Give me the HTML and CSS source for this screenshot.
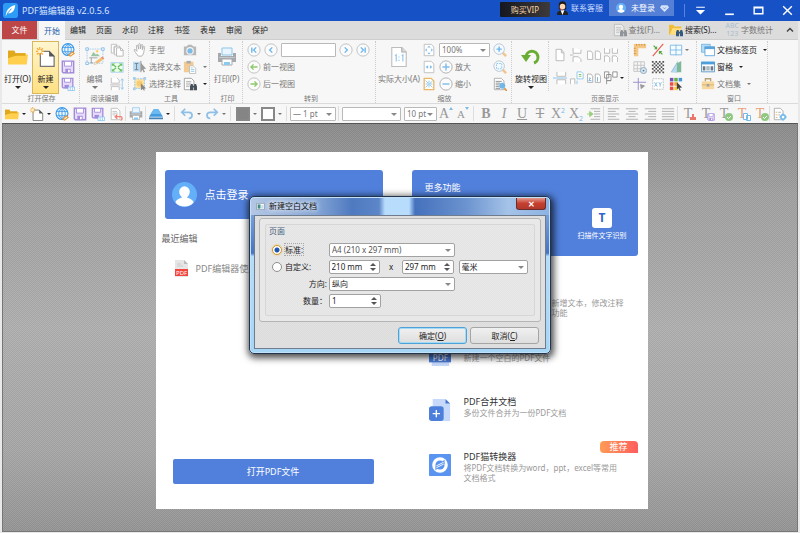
FILE: index.html
```html
<!DOCTYPE html>
<html lang="zh-CN">
<head>
<meta charset="utf-8">
<title>PDF猫编辑器 v2.0.5.6</title>
<link rel="stylesheet" href="styles.css">
</head>
<body>
<svg class="defs" aria-hidden="true">
  <symbol id="folder" viewBox="0 0 16 16"><path d="M0 13V3h5l1 2h8v3" fill="#e5ae22"/><path d="M0 14V8l6-1 1-1h9l-1 8z" fill="#ffcf4d"/><path d="M0 13V3h5l1 2h8v2H6L0 9z" fill="#e0a91c"/></symbol>
  <symbol id="newdoc" viewBox="0 0 16 16"><path d="M3.500 3.500h7l4 4v8h-11z" fill="#fff" stroke="#777"/><path d="M10.500 3v4.500H15z" fill="#555"/><path d="M3 0v7M0 3.500h6.500M.8 1l4.600 5M5.400 1L.8 6" stroke="#f3aa3b" fill="none"/><circle cx="3" cy="3.500" r="1.500" fill="#fff1c5"/></symbol>
  <symbol id="globe" viewBox="0 0 16 16"><circle cx="8" cy="7.500" r="6.800" fill="#e9f5ff" stroke="#3b98e8" stroke-width="1.300"/><path d="M1.500 5h13M1.500 10h13M8 1v13M8 1C3 5 3 10 8 14M8 1c5 4 5 9 0 13" fill="none" stroke="#3b98e8"/><path d="M9 14l4-4 2 2-4 3z" fill="#fff" stroke="#e89937" stroke-width="1.300"/></symbol>
  <symbol id="save" viewBox="0 0 16 16"><path d="M1.500 1.500h13v13h-12l-1-1z" fill="#e7ddfa" stroke="#a38bd9" stroke-width="1.600"/><path d="M4 2v5h8V2" fill="#fff" stroke="#a38bd9"/><path d="M5 10h6v5H5z" fill="#a38bd9"/><path d="M8 11h2v3H8z" fill="#fff"/></symbol>
  <symbol id="saveas" viewBox="0 0 16 16"><path d="M1.500 1.500h12v11h-11l-1-1z" fill="#e7ddfa" stroke="#a38bd9" stroke-width="1.500"/><path d="M4 2v4h7V2" fill="#fff" stroke="#a38bd9"/><path d="M4 9h5v4H4z" fill="#a38bd9"/><path d="M8 11.500h7.500v4H8zM10.500 12v3M13 12v3" fill="#fff" stroke="#73b9ea" stroke-width=".8"/></symbol>
  <symbol id="editimg" viewBox="0 0 24 24"><path d="M2.500 2.500h19v17h-19z" fill="none" stroke="#9fc9ea" stroke-dasharray="2 1"/><path d="M1 1h3v3H1zM20 1h3v3h-3zM1 18h3v3H1z" fill="#fff" stroke="#79b6e8"/><path d="M7 11l3-5 3 3 2-1 3 3z" fill="#9ac5a2"/><circle cx="14.500" cy="5" r="1.500" fill="#ffcf6c"/><path d="M5 13h10M7.500 13v6M6 19h4" stroke="#999" fill="none"/><path d="M11 21l1-3 8-6 3 2-8 6z" fill="#f3bd76"/><path d="M11 21l1-3 3 2z" fill="#fff2d8" stroke="#bbb" stroke-width=".5"/><path d="M19 12.500l2-1 2 2-1 1z" fill="#e88878"/></symbol>
  <symbol id="copy" viewBox="0 0 16 16"><path d="M1.500 1.500h6v3h-3v7h-3zM5 3.500h6v3H8v7H5z" fill="#fff" stroke="#bbb"/><path d="M7.500 5.500h5l2.500 2.500v7H7.500z" fill="#fff" stroke="#b3b3b3"/><path d="M12 5.500V8.500h3" fill="none" stroke="#b3b3b3"/></symbol>
  <symbol id="fit" viewBox="0 0 16 16"><path d="M1 3h14v11H1z" fill="#eaffe5" stroke="#a8cfee"/><path d="M3 5l4 3M13 5L9 8M3 12l4-3M13 12L9 9" stroke="#5db75d" stroke-width="1.300"/><path d="M2 4h4L2 7zM14 4h-4l4 3zM2 13h4l-4-3zM14 13h-4l4-3z" fill="#71bc69"/></symbol>
  <symbol id="heightfit" viewBox="0 0 16 16"><path d="M1.500 1v6h9V3.500L8 1M1.500 15v-4h9v4M0 9h12" fill="#fff" stroke="#bdbdbd"/><path d="M14 2v12M12.500 4L14 2l1.500 2M12.500 12l1.500 2 1.500-2" stroke="#92c8ee" fill="none"/></symbol>
  <symbol id="hand" viewBox="0 0 16 16"><path d="M4.500 13C2 10 1 8 1.500 7.500S4 8.500 4.500 9.500L4 3.500c0-1.500 1.500-1.500 1.700 0L6.500 7 6.700 1.800c0-1.500 1.600-1.500 1.700 0l.2 5 .9-4.300c.3-1.300 1.800-1 1.600.3l-.5 5 1.200-3.300c.5-1.200 1.800-.7 1.500.6C12 10 13 12 10 15H6z" fill="#fff" stroke="#aaa"/></symbol>
  <symbol id="seltext" viewBox="0 0 16 16"><path d="M0 2h8v11H0z" fill="#b9d9f0"/><path d="M2 4h4M4 4v7M2 11h4" stroke="#6f7f8c"/><path d="M9 1v13" stroke="#888"/><path d="M9 3l6 7-3 .3 1.700 3.200-1.500.7-1.600-3L9 13z" fill="#9b9b9b"/></symbol>
  <symbol id="selnote" viewBox="0 0 16 16"><path d="M2 2h11v11H2z" fill="#ffe3a5" stroke="#88c2ed" stroke-dasharray="2 1"/><circle cx="7.500" cy="7.500" r="3.500" fill="#f9cb72"/><path d="M0 0h3v3H0zM12 0h3v3h-3zM0 12h3v3H0z" fill="#a5cfed"/><path d="M9 7l6 6-2.500.2 1 2-1 .5-1.200-2L9 15z" fill="#888"/></symbol>
  <symbol id="camera" viewBox="0 0 16 16"><path d="M1 4h3l2-2h4l2 2h3v10H1z" fill="#b8b8b8"/><circle cx="8" cy="9" r="4.300" fill="#f4f4f4"/><circle cx="8" cy="9" r="3" fill="#7dbce7"/></symbol>
  <symbol id="paste" viewBox="0 0 16 16"><path d="M1 2h11v12H1z" fill="#f3ca92"/><path d="M4 1h5v3H4z" fill="#aaa"/><path d="M7.500 6.500h4l3 3v6h-7z" fill="#fff" stroke="#bbb"/><path d="M9 9h2M9 11h4M9 13h4" stroke="#8ec8ed"/></symbol>
  <symbol id="finddoc" viewBox="0 0 16 16"><path d="M1.500 1.500h8l3 3v10h-11z" fill="#fff" stroke="#999"/><path d="M3.500 5h6M3.500 7h6M3.500 9h5M3.500 11h4" stroke="#aaa"/><path d="M8 10.500L9 8h2l.5 2h1L13 8h2l1 3v4h-3.500v-3h-1v3H8z" fill="#47515b"/></symbol>
  <symbol id="findfolder" viewBox="0 0 16 16"><path d="M0 13V2h5l1 2h8v9z" fill="#efbd37"/><path d="M1 13l3-7h10v7z" fill="#ffdf83"/><path d="M8 10.500L9 8h2l.5 2h1L13 8h2l1 3v4h-3.500v-3h-1v3H8z" fill="#345a80"/></symbol>
  <symbol id="printer" viewBox="0 0 20 20"><path d="M5 1h10v7H5z" fill="#eaf5ff" stroke="#90c5eb"/><path d="M1 6h3v3h12V6h3v9H1z" fill="#a5a9ad"/><path d="M2 10h16v1H2z" fill="#c5c9cc"/><path d="M5 12h10v6H5z" fill="#fff" stroke="#aaa"/><path d="M7 15h6v3H7z" fill="#8cc9f1"/></symbol>
  <symbol id="first" viewBox="0 0 16 16"><circle cx="8" cy="8" r="7" fill="#fbfbfb" stroke="#bbb"/><path d="M5.500 5v6M10.500 5l-3 3 3 3" fill="none" stroke="#6fb8ed" stroke-width="1.600"/></symbol>
  <symbol id="prev" viewBox="0 0 16 16"><circle cx="8" cy="8" r="7" fill="#fbfbfb" stroke="#bbb"/><path d="M9.500 5l-3 3 3 3" fill="none" stroke="#6fb8ed" stroke-width="1.600"/></symbol>
  <symbol id="next" viewBox="0 0 16 16"><circle cx="8" cy="8" r="7" fill="#fbfbfb" stroke="#bbb"/><path d="M6.500 5l3 3-3 3" fill="none" stroke="#6fb8ed" stroke-width="1.600"/></symbol>
  <symbol id="last" viewBox="0 0 16 16"><circle cx="8" cy="8" r="7" fill="#fbfbfb" stroke="#bbb"/><path d="M10.500 5v6M5.500 5l3 3-3 3" fill="none" stroke="#6fb8ed" stroke-width="1.600"/></symbol>
  <symbol id="back" viewBox="0 0 16 16"><circle cx="8" cy="8" r="7" fill="#fbfbfb" stroke="#bbb"/><path d="M12 8H5M7.500 5L4.500 8l3 3" fill="none" stroke="#90c96c" stroke-width="1.600"/></symbol>
  <symbol id="forward" viewBox="0 0 16 16"><circle cx="8" cy="8" r="7" fill="#fbfbfb" stroke="#bbb"/><path d="M4 8h7M8.500 5l3 3-3 3" fill="none" stroke="#90c96c" stroke-width="1.600"/></symbol>
  <symbol id="plus" viewBox="0 0 16 16"><circle cx="8" cy="8" r="7" fill="#fbfbfb" stroke="#aaa"/><path d="M4 8h8M8 4v8" stroke="#7fbdea" stroke-width="1.600"/></symbol>
  <symbol id="minus" viewBox="0 0 16 16"><circle cx="8" cy="8" r="7" fill="#fbfbfb" stroke="#aaa"/><path d="M4 8h8" stroke="#7fbdea" stroke-width="1.600"/></symbol>
  <symbol id="actual" viewBox="0 0 16 18"><path d="M1.500.5h9l4 4v13h-13z" fill="#fff" stroke="#bdbdbd"/><path d="M10.500.5v4h4" fill="#ddd" stroke="#aaa"/><path d="M4.500 8l1-1v6M10.500 8l1-1v6M8 8.500v1M8 11.500v1" stroke="#8fc5ea" fill="none"/></symbol>
  <symbol id="pagefit" viewBox="0 0 16 16"><path d="M2.500 1.500h8l3 3v10h-11z" fill="#fff" stroke="#bbb"/><path d="M8 3l2 2H6zM8 13l2-2H6zM3.500 8l2-2v4zM12.500 8l-2-2v4z" fill="#7fbdea"/></symbol>
  <symbol id="widthfit" viewBox="0 0 16 16"><path d="M2.500 1.500h8l3 3v10h-11z" fill="#fff" stroke="#bbb"/><path d="M4 8l3-2v4zM12 8L9 6v4z" fill="#7fbdea"/></symbol>
  <symbol id="visfit" viewBox="0 0 16 16"><path d="M2.500 1.500h8l3 3v10h-11z" fill="#fff" stroke="#e9b866" stroke-width="1.500"/><path d="M4 4l3 3M12 5L9 7M4 12l3-3M12 12L9 9M8 4v8M4 8h8" stroke="#8fc5ea"/></symbol>
  <symbol id="magnify" viewBox="0 0 16 16"><path d="M11 11l4 4" stroke="#f1c68f" stroke-width="3"/><circle cx="7" cy="7" r="6" fill="#f4faff" stroke="#b5c3cf"/><path d="M4 7h6M7 4v6" stroke="#6cb5ea" stroke-width="1.600"/></symbol>
  <symbol id="marquee" viewBox="0 0 16 16"><path d="M11 11l4 4" stroke="#f1c68f" stroke-width="3"/><circle cx="7" cy="7" r="6" fill="#f4faff" stroke="#b5c3cf"/><path d="M4 4h6v6H4z" fill="none" stroke="#8cc6ed" stroke-dasharray="2 1"/></symbol>
  <symbol id="doczoom" viewBox="0 0 16 16"><path d="M1.500 1.500h8l3 3v10h-11z" fill="#fff" stroke="#aaa"/><path d="M3 5h7M3 7h5M3 9h4M3 11h4M3 13h5" stroke="#888"/><circle cx="10.500" cy="10" r="3.500" fill="#72b8e7"/><path d="M13 13l3 3" stroke="#df963c" stroke-width="2"/></symbol>
  <symbol id="rotate" viewBox="0 0 20 20"><path d="M5 10A6 6 0 1 1 13 16" fill="none" stroke="#69ad34" stroke-width="3"/><path d="M0 8h10l-5 7z" fill="#69ad34"/></symbol>
  <symbol id="page" viewBox="0 0 16 16"><path d="M3.500 1.500h6l3 4v9h-9z" fill="#fff" stroke="#b3b3b3"/><path d="M9.500 1.500v4h3" fill="none" stroke="#b3b3b3"/></symbol>
  <symbol id="contpage" viewBox="0 0 16 16"><path d="M3.500 0v6h9V2M3.500 16v-6h6l3 3v3M0 8h4" fill="#fff" stroke="#b3b3b3"/></symbol>
  <symbol id="twopage" viewBox="0 0 16 16"><path d="M.5 3.500h4l2 2.500v7h-6zM9.500 3.500h4l2 2.500v7h-6z" fill="#fff" stroke="#b3b3b3"/></symbol>
  <symbol id="fourpage" viewBox="0 0 16 16"><path d="M.5 0v6h6V1M9.500 0v6h6V1M.5 16V9h4l2 2v5M9.500 16V9h4l2 2v5" fill="#fff" stroke="#b3b3b3"/></symbol>
  <symbol id="splitpage" viewBox="0 0 16 16"><path d="M4.500 1v5h10V1M4.500 15v-5h10v5" fill="#fff" stroke="#b3b3b3"/><path d="M0 8h16" stroke="#7fc0ed"/></symbol>
  <symbol id="cover" viewBox="0 0 16 16"><path d="M.5 15V9h5v6" fill="#fff" stroke="#b3b3b3"/><path d="M8 1h5l2 2v6H8zM8 15v-4" fill="#fff" stroke="#89c5ec"/><path d="M10 4h3M10 6h3" stroke="#77b95b"/></symbol>
  <symbol id="order" viewBox="0 0 16 16"><path d="M.5 3.500h4l2 2.500v7h-6zM9.500 3.500h4l2 2.500v7h-6z" fill="#fff" stroke="#aaa"/><path d="M2 8h2l-2 3h3M12 7v5" fill="none" stroke="#68aee0"/></symbol>
  <symbol id="overlap" viewBox="0 0 16 16"><path d="M.5 1h5v7h-5zM3 4h5v7H3zM10 1h5v6h-5zM3 15v-4h5" fill="#fff" stroke="#888"/></symbol>
  <symbol id="ruler" viewBox="0 0 16 16"><path d="M1 1h14v5H6v9H1z" fill="#f3c887"/><path d="M4 1v2M7 1v2M10 1v2M13 1v2M1 6h2M1 9h2M1 12h2" stroke="#c98a3b"/></symbol>
  <symbol id="guides" viewBox="0 0 16 16"><path d="M2 15L14 1" stroke="#e85b50" stroke-width="1.300"/><path d="M3 3l3.500 3.500M13 13L9.500 9.500" stroke="#57a746" stroke-width="1.500"/><path d="M7 7V3.500L3.500 7zM9 9h4L9 13z" fill="#57a746"/></symbol>
  <symbol id="grid" viewBox="0 0 16 16"><path d="M1.500 2.500h13v11h-13zM1.500 8h13M8 2v12" fill="#f6fbff" stroke="#78b8e6"/></symbol>
  <symbol id="gridview" viewBox="0 0 16 16"><path d="M1 2h12v11H1zM1 6h12M1 10h12M5 2v11M9 2v11" fill="none" stroke="#c2c2c2"/><circle cx="12" cy="12" r="3.500" fill="#d4e7f4" stroke="#8aa2b6"/><circle cx="12" cy="12" r="1" fill="#54799a"/></symbol>
  <symbol id="checker" viewBox="0 0 16 16"><path d="M1 1h14v14H1z" fill="#fff"/><path d="M2 1v14M6 1v14M10 1v14M14 1v14" stroke="#555" stroke-width="2" stroke-dasharray="2 2"/><path d="M4 3v12M8 3v12M12 3v12" stroke="#555" stroke-width="2" stroke-dasharray="2 2"/></symbol>
  <symbol id="contrast" viewBox="0 0 16 16"><path d="M2 14L10 1v13z" fill="#90b7ce"/><path d="M9 4l5-3v13H7z" fill="#7fb99a"/><path d="M9 14V4l-6 10z" fill="#b7d8f2"/></symbol>
  <symbol id="cross" viewBox="0 0 16 16"><path d="M6 1v14M0 6h15" stroke="#9485ca"/><path d="M8 8l6 2-5 4z" fill="#999"/></symbol>
  <symbol id="xy" viewBox="0 0 16 16"><path d="M2 2h12v12H2z" fill="#fff" stroke="#bbb" stroke-dasharray="2 1"/><path d="M4 6l3 5M7 6l-3 5M9 6l1.500 2.500L12 6M10.500 8v3" stroke="#80b9e2" fill="none"/></symbol>
  <symbol id="palette" viewBox="0 0 16 16"><path d="M1 1h4v4H1z" fill="#7554b5"/><path d="M6 1h4v4H6z" fill="#6ab04a"/><path d="M11 1h4v4h-4z" fill="#4597dc"/><path d="M1 6h4v4H1z" fill="#e55249"/><path d="M6 6h4v4H6z" fill="#f6a83d"/><path d="M1 11h4v4H1z" fill="#e55249"/><path d="M6 11h4v4H6z" fill="#f5ce3f"/><path d="M9 6l6 6-3 .2 1.500 3-1.200.6-1.400-3L9 14z" fill="#444"/></symbol>
  <symbol id="tabs" viewBox="0 0 16 16"><path d="M.5 1.500h10v9H.5z" fill="#b5dcf7" stroke="#73b5e5"/><path d="M4.500 4.500h11v10h-11z" fill="#fff" stroke="#5ba3d9"/><path d="M4 4h12v3H4z" fill="#5ba3d9"/></symbol>
  <symbol id="panes" viewBox="0 0 16 16"><path d="M.5 2.500h15v11H.5z" fill="#fff" stroke="#4b91c7"/><path d="M0 2h16v3H0z" fill="#4b9fdc"/><path d="M2 7h3v5H2zM11 7h3v5h-3z" fill="#6d7b87"/><path d="M6 7h4v5H6z" fill="#adb8c0"/></symbol>
  <symbol id="case" viewBox="0 0 16 16"><path d="M5 5V2h6v3" fill="none" stroke="#b5a078" stroke-width="1.500"/><path d="M1 5h14v9H1z" fill="#f7d79c"/><path d="M1 9h14" stroke="#d6b06f"/><path d="M6.500 8h3v3h-3z" fill="#a3a3a3"/></symbol>
  <symbol id="revert" viewBox="0 0 16 16"><path d="M2.500 1.500h7l3 3v10h-10z" fill="#fff" stroke="#bbb"/><path d="M4 5h5M4 7h6M4 9h3" stroke="#bbb"/><path d="M7 11h6a2 2 0 0 1 0 4M9.500 8.500L7 11l2.500 2.500" fill="none" stroke="#ef8074" stroke-width="1.500"/></symbol>
  <symbol id="scanner" viewBox="0 0 16 16"><path d="M5 3C6 2 10 2 11 3l5 8H0z" fill="#449be0"/><path d="M5 3c1-1 5-1 6 0l3 5H2z" fill="#6cb8f0"/><path d="M0 12h16v2H0z" fill="#4383b8"/></symbol>
  <symbol id="undo" viewBox="0 0 16 16"><path d="M2 6h8c5 0 5 7 0 7M6 2L2 6l4 4" fill="none" stroke="#8fbfe6" stroke-width="2"/></symbol>
  <symbol id="redo" viewBox="0 0 16 16"><path d="M14 6H6c-5 0-5 7 0 7M10 2l4 4-4 4" fill="none" stroke="#8fbfe6" stroke-width="2"/></symbol>
  <symbol id="left" viewBox="0 0 16 16"><path d="M1 2h13M1 5h9M1 8h13M1 11h9M1 14h13" stroke="#aaa"/></symbol>
  <symbol id="center" viewBox="0 0 16 16"><path d="M1 2h14M4 5h8M1 8h14M4 11h8M1 14h14" stroke="#aaa"/></symbol>
  <symbol id="right" viewBox="0 0 16 16"><path d="M2 2h13M6 5h9M2 8h13M6 11h9M2 14h13" stroke="#aaa"/></symbol>
  <symbol id="justify" viewBox="0 0 16 16"><path d="M1 2h14M1 5h14M1 8h14M1 11h14M1 14h14" stroke="#aaa"/></symbol>
  <symbol id="indent" viewBox="0 0 16 16"><path d="M4 2h11M8 5h7M8 8h7M8 11h7M4 14h11" stroke="#aaa"/><path d="M0 8h4M3 5l4 3-4 3z" stroke="#9dce7c" fill="#9dce7c"/></symbol>
  <symbol id="stamp" viewBox="0 0 8 8"><path d="M3 1h2v3h2v3H1V4h2z" fill="#e87769"/></symbol>
  <symbol id="tick" viewBox="0 0 8 8"><circle cx="4" cy="4" r="4" fill="#8fc97f"/><path d="M2 4l1.500 1.500L6 3" fill="none" stroke="#fff"/></symbol>
  <symbol id="sheets" viewBox="0 0 8 8"><path d="M.5.5h4v6h-4zM3.500 2.500h4v5h-4z" fill="#fff" stroke="#74bbea"/></symbol>
  <symbol id="settings" viewBox="0 0 16 16"><path d="M1.500 1.500h7l3 3v10h-10z" fill="#fff" stroke="#aaa"/><path d="M3 6h2M3 9h2M3 12h2" stroke="#eaaa68"/><path d="M6 6h3M6 9h2" stroke="#aaa"/><circle cx="11.500" cy="11.500" r="2.500" fill="#fff" stroke="#74bbea" stroke-width="2"/><path d="M11.500 7v2M11.500 14v2M7 11.500h2M14 11.500h2" stroke="#74bbea"/></symbol>
  <symbol id="person" viewBox="0 0 26 26"><circle cx="13" cy="13" r="13" fill="#64b0f8"/><path d="M7.500 10a5.500 5.500 0 0 1 11 0c0 3-1.500 5-3 6 3 1 6 2 7 5-4 6-15 6-19 0 1-3 4-4 7-5-1.500-1-3-3-3-6z" fill="#fff"/></symbol>
</svg>

<div class="app">
  <header class="titlebar">
    <svg class="logo" viewBox="0 0 16 16"><rect width="16" height="16" rx="3" fill="#2d9cf5"/><path d="M3 14c0-6 3-10 10-12 0 5-3 9-7 9-1 0-2 1-3 3z" fill="#fff"/><path d="M4 12l5-6" stroke="#2d9cf5"/></svg>
    <h1>PDF猫编辑器 v2.0.5.6</h1>
    <button class="vip">购买VIP</button>
    <a class="service" href="#service"><svg class="agent" viewBox="0 0 14 16"><path d="M3 9V4c0-5 8-5 8 0v5z" fill="#201914"/><circle cx="7" cy="6" r="3" fill="#ffd7b5"/><path d="M1 15c0-4 3-5 6-5s6 1 6 5z" fill="#222"/><path d="M5 10l2 5 2-5z" fill="#fff"/><path d="M4 8l3 2" stroke="#e65d42"/></svg>联系客服</a>
    <button class="account"><svg class="avatar-small"><use href="#person"/></svg>未登录<svg class="gem" viewBox="0 0 12 9"><path d="M2 0h8l2 3-6 6-6-6z" fill="#d6e3f8"/><path d="M4 3l2 2 2-2" fill="none" stroke="#4d7dd0"/></svg></button>
    <div class="window-tools">
      <button aria-label="菜单"><svg viewBox="0 0 12 12"><path d="M2 3h8M3 6h6L6 9z" fill="#fff" stroke="#fff"/></svg></button>
      <button aria-label="最小化"><svg viewBox="0 0 12 12"><path d="M2 9.500h8" stroke="#fff" stroke-width="1.500"/></svg></button>
      <button aria-label="最大化"><svg viewBox="0 0 12 12"><path d="M2 3h8v6H2zM2 3.500h8" fill="none" stroke="#fff" stroke-width="1.300"/></svg></button>
      <button aria-label="关闭"><svg viewBox="0 0 12 12"><path d="M2 2l8 8M10 2l-8 8" stroke="#fff" stroke-width="1.300"/></svg></button>
    </div>
  </header>

  <nav class="tabs">
    <button class="file">文件</button>
    <button class="tab active">开始</button><button class="tab">编辑</button><button class="tab">页面</button><button class="tab">水印</button><button class="tab">注释</button><button class="tab">书签</button><button class="tab">表单</button><button class="tab">审阅</button><button class="tab">保护</button>
    <div class="tab-tools">
      <button class="muted"><svg class="i faded"><use href="#finddoc"/></svg>查找(F)...</button>
      <button><svg class="i"><use href="#findfolder"/></svg>搜索(S)...</button>
      <button class="muted"><span class="abc">ABC<br>123</span>字数统计</button>
      <button class="collapse" aria-label="折叠"><svg viewBox="0 0 8 8"><path d="M1 5.500l3-3 3 3" fill="none" stroke="#444" stroke-width="1.500"/></svg></button>
    </div>
  </nav>

  <section class="ribbon">
    <div class="group g-file">
      <div class="tools">
        <button class="big"><svg class="bi"><use href="#folder"/></svg>打开(O)<i class="ar"></i></button>
        <button class="big hot"><svg class="bi"><use href="#newdoc"/></svg>新建<i class="ar"></i></button>
        <div class="col">
          <button aria-label="网页"><svg class="i"><use href="#globe"/></svg></button>
          <button aria-label="保存"><svg class="i"><use href="#save"/></svg></button>
          <button aria-label="另存为"><svg class="i"><use href="#saveas"/></svg></button>
        </div>
      </div>
      <h2>打开保存</h2>
    </div>
    <div class="group g-edit">
      <div class="tools">
        <button class="big muted"><svg class="bi"><use href="#editimg"/></svg>编辑<i class="ar"></i></button>
        <div class="col">
          <button aria-label="复制"><svg class="i"><use href="#copy"/></svg></button>
          <button aria-label="全屏"><svg class="i"><use href="#fit"/></svg></button>
          <button aria-label="适合高度"><svg class="i"><use href="#heightfit"/></svg></button>
        </div>
      </div>
      <h2>阅读编辑</h2>
    </div>
    <div class="group g-tool">
      <div class="tools">
        <div class="col muted">
          <button><svg class="i"><use href="#hand"/></svg>手型</button>
          <button><svg class="i"><use href="#seltext"/></svg>选择文本</button>
          <button><svg class="i"><use href="#selnote"/></svg>选择注释</button>
        </div>
        <div class="col">
          <button aria-label="快照"><svg class="i"><use href="#camera"/></svg></button>
          <button class="muted" aria-label="粘贴"><svg class="i"><use href="#paste"/></svg><i class="ar"></i></button>
          <button aria-label="查找"><svg class="i"><use href="#finddoc"/></svg><i class="ar"></i></button>
        </div>
      </div>
      <h2>工具</h2>
    </div>
    <div class="group g-print">
      <div class="tools"><button class="big muted"><svg class="bi"><use href="#printer"/></svg>打印(P)</button></div>
      <h2>打印</h2>
    </div>
    <div class="group g-goto">
      <div class="tools">
        <div class="col muted">
          <div class="nav-row">
            <button aria-label="首页"><svg class="i"><use href="#first"/></svg></button>
            <button aria-label="上一页"><svg class="i"><use href="#prev"/></svg></button>
            <input class="field page-no" type="text" aria-label="页码">
            <button aria-label="下一页"><svg class="i"><use href="#next"/></svg></button>
            <button aria-label="末页"><svg class="i"><use href="#last"/></svg></button>
          </div>
          <button><svg class="i"><use href="#back"/></svg>前一视图</button>
          <button><svg class="i"><use href="#forward"/></svg>后一视图</button>
        </div>
      </div>
      <h2>转到</h2>
    </div>
    <div class="group g-zoom">
      <div class="tools">
        <button class="big muted"><svg class="bi"><use href="#actual"/></svg>实际大小(A)</button>
        <div class="col">
          <button aria-label="适合页面"><svg class="i"><use href="#pagefit"/></svg></button>
          <button aria-label="适合宽度"><svg class="i"><use href="#widthfit"/></svg></button>
          <button aria-label="适合可见"><svg class="i"><use href="#visfit"/></svg></button>
        </div>
        <div class="col muted">
          <span class="drop"><select class="field zoom-level" aria-label="缩放比例"><option>100%</option></select></span>
          <button><svg class="i"><use href="#plus"/></svg>放大</button>
          <button><svg class="i"><use href="#minus"/></svg>缩小</button>
        </div>
        <div class="col">
          <button aria-label="放大工具"><svg class="i"><use href="#magnify"/></svg></button>
          <button aria-label="框选缩放"><svg class="i"><use href="#marquee"/></svg></button>
          <button aria-label="缩放窗格"><svg class="i"><use href="#doczoom"/></svg></button>
        </div>
      </div>
      <h2>缩放</h2>
    </div>
    <div class="group g-view">
      <div class="tools">
        <button class="big"><svg class="bi"><use href="#rotate"/></svg>旋转视图<i class="ar"></i></button>
        <div class="layouts">
          <button aria-label="单页"><svg class="i"><use href="#page"/></svg></button>
          <button aria-label="连续"><svg class="i"><use href="#contpage"/></svg></button>
          <button aria-label="双页"><svg class="i"><use href="#twopage"/></svg></button>
          <button aria-label="双页连续"><svg class="i"><use href="#fourpage"/></svg></button>
          <button aria-label="分隔"><svg class="i"><use href="#splitpage"/></svg></button>
          <button aria-label="封面"><svg class="i"><use href="#cover"/></svg></button>
          <button aria-label="右到左"><svg class="i"><use href="#order"/></svg></button>
          <button aria-label="更多"><svg class="i"><use href="#overlap"/></svg><i class="ar"></i></button>
        </div>
        <div class="marks">
          <button aria-label="标尺"><svg class="i"><use href="#ruler"/></svg></button>
          <button aria-label="参考线"><svg class="i"><use href="#guides"/></svg></button>
          <button class="muted" aria-label="网格"><svg class="i"><use href="#grid"/></svg><i class="ar"></i></button>
          <button aria-label="显示网格"><svg class="i"><use href="#gridview"/></svg></button>
          <button aria-label="透明网格"><svg class="i"><use href="#checker"/></svg></button>
          <button aria-label="对比"><svg class="i"><use href="#contrast"/></svg></button>
          <button aria-label="十字线"><svg class="i"><use href="#cross"/></svg></button>
          <button aria-label="坐标"><svg class="i"><use href="#xy"/></svg></button>
          <button aria-label="颜色"><svg class="i"><use href="#palette"/></svg></button>
        </div>
      </div>
      <h2>页面显示</h2>
    </div>
    <div class="group g-window">
      <div class="tools">
        <div class="col">
          <button><svg class="i"><use href="#tabs"/></svg>文档标签页<i class="ar"></i></button>
          <button><svg class="i"><use href="#panes"/></svg>窗格<i class="ar"></i></button>
          <button class="muted"><svg class="i"><use href="#case"/></svg>文档集<i class="ar"></i></button>
        </div>
      </div>
      <h2>窗口</h2>
    </div>
  </section>

  <div class="toolbar">
    <button aria-label="打开"><svg class="i"><use href="#folder"/></svg><i class="ar"></i></button>
    <button aria-label="新建"><svg class="i"><use href="#newdoc"/></svg><i class="ar"></i></button>
    <button aria-label="网页"><svg class="i"><use href="#globe"/></svg></button>
    <button aria-label="保存"><svg class="i"><use href="#save"/></svg></button>
    <button aria-label="另存为"><svg class="i"><use href="#saveas"/></svg></button>
    <button aria-label="恢复"><svg class="i"><use href="#revert"/></svg></button>
    <i class="sep tight"></i>
    <button aria-label="打印"><svg class="i"><use href="#printer"/></svg></button>
    <i class="sep tight"></i>
    <button aria-label="扫描"><svg class="i"><use href="#scanner"/></svg><i class="ar"></i></button>
    <i class="sep"></i>
    <button class="muted" aria-label="撤销"><svg class="i"><use href="#undo"/></svg><i class="ar"></i></button>
    <button class="muted" aria-label="重做"><svg class="i"><use href="#redo"/></svg><i class="ar"></i></button>
    <i class="sep"></i>
    <button class="muted" aria-label="填充颜色"><span class="swatch solid"></span><i class="ar"></i></button>
    <button class="muted" aria-label="边框颜色"><span class="swatch"></span><i class="ar"></i></button>
    <i class="sep"></i>
    <span class="drop muted"><select class="field line-width" aria-label="线宽"><option>— 1 pt</option></select></span>
    <i class="sep"></i>
    <span class="drop muted"><select class="field font-name" aria-label="字体"><option></option></select></span>
    <span class="drop muted"><select class="field font-size" aria-label="字号"><option>10 pt</option></select></span>
    <button class="glyph" aria-label="增大字号">A<sup class="up"></sup></button>
    <button class="glyph small" aria-label="减小字号">A<sup class="down"></sup></button>
    <i class="sep"></i>
    <button class="glyph"><b>B</b></button>
    <button class="glyph"><em>I</em></button>
    <button class="glyph"><u>U</u></button>
    <button class="glyph"><s>T</s></button>
    <button class="glyph">X<sup>2</sup></button>
    <button class="glyph">X<sub>2</sub></button>
    <button aria-label="缩进"><svg class="i"><use href="#indent"/></svg></button>
    <i class="sep tight"></i>
    <button aria-label="左对齐"><svg class="i"><use href="#left"/></svg></button>
    <button aria-label="居中"><svg class="i"><use href="#center"/></svg></button>
    <button aria-label="右对齐"><svg class="i"><use href="#right"/></svg></button>
    <button aria-label="两端对齐"><svg class="i"><use href="#justify"/></svg></button>
    <i class="sep tight"></i>
    <button class="glyph">T<svg class="badge-icon"><use href="#stamp"/></svg></button>
    <button class="glyph">T<svg class="badge-icon"><use href="#save"/></svg></button>
    <button class="glyph">T<svg class="badge-icon"><use href="#tick"/></svg></button>
    <button class="glyph warm">T<svg class="badge-icon"><use href="#sheets"/></svg></button>
    <button class="glyph warm">T<svg class="badge-icon"><use href="#tick"/></svg></button>
    <i class="sep tight"></i>
    <button aria-label="设置"><svg class="i"><use href="#settings"/></svg></button>
  </div>

  <main class="canvas">
    <div class="page">
      <section class="start">
        <button class="login"><svg class="avatar"><use href="#person"/></svg>点击登录</button>
        <h3>最近编辑</h3>
        <a class="recent" href="#recent"><svg class="pdf-icon" viewBox="0 0 16 18"><path d="M2 0h9l4 4v13H2z" fill="#e6e6e6"/><path d="M11 0v4h4z" fill="#bbb"/><path d="M4 4h4M4 6h6" stroke="#ccc"/><path d="M2 9h13v7H2z" fill="#f1453d"/><text x="3" y="15" font-size="6" fill="#fff">PDF</text></svg>PDF编辑器使用教程</a>
        <button class="open">打开PDF文件</button>
      </section>
      <section class="more">
        <div class="features">
          <h3>更多功能</h3>
          <button class="ocr"><span class="tile">T</span>扫描件文字识别</button>
        </div>
        <ul>
          <li><svg viewBox="0 0 24 24"><path d="M4 1h14l5 5v17H4z" fill="#b9d0f7"/><path d="M0 10h16v13H0z" fill="#4c7fdc"/></svg><div><h4>PDF编辑</h4><p>编辑修改文档文字图片，新增文本，修改注释<br>添加水印以及更多的编辑功能</p></div></li>
          <li><svg viewBox="0 0 24 24"><path d="M3 0h14l5 5v19H3z" fill="#c6d9fa"/><path d="M0 8h24v12H0z" fill="#4a7cda"/><text x="4" y="18" font-size="9" fill="#fff">PDF</text></svg><div><h4>新建</h4><p>新建一个空白的PDF文件</p></div></li>
          <li><svg viewBox="0 0 24 24"><path d="M4 0h13l6 5v19H4z" fill="#c6d9fa"/><path d="M18 0l5 5h-5z" fill="#4777d4"/><rect y="8" width="16" height="16" rx="3" fill="#4c7fdc"/><path d="M8 12v8M4 16h8" stroke="#fff" stroke-width="1.500"/></svg><div><h4>PDF合并文档</h4><p>多份文件合并为一份PDF文档</p></div></li>
          <li><svg viewBox="0 0 24 24"><rect width="24" height="24" rx="1" fill="#5a94f1"/><circle cx="12" cy="12" r="8.500" fill="#fff"/><circle cx="12" cy="12" r="5" fill="#5a94f1"/><path d="M17 6v5h-5zM7 18v-5h5z" fill="#5a94f1"/><path d="M8 13l8-4M8 15l8-4" stroke="#fff"/></svg><div><h4>PDF猫转换器</h4><p>将PDF文档转换为word，ppt，excel等常用<br>文档格式</p></div><span class="tag">推荐</span></li>
        </ul>
      </section>
    </div>
  </main>

  <form class="dialog" role="dialog" aria-labelledby="dlg-title">
    <header><svg viewBox="0 0 12 10"><path d="M.5.5h11v9H.5z" fill="#fff" stroke="#7b8d9e"/><path d="M2 2h4v6H2z" fill="#3f8a83"/><path d="M7 3h3v5H7z" fill="#c4dbea"/></svg><h2 id="dlg-title">新建空白文档</h2><button type="button" class="close" aria-label="关闭">✕</button></header>
    <div class="dialog-body">
      <div class="panel">
        <fieldset>
          <legend>页面</legend>
          <div class="row">
            <label class="radio"><input type="radio" name="size" checked><span class="focus">标准:</span></label>
            <span class="drop wide"><select class="field preset" aria-label="标准尺寸"><option>A4 (210 x 297 mm)</option></select></span>
          </div>
          <div class="row">
            <label class="radio"><input type="radio" name="size"><span>自定义:</span></label>
            <span class="spin"><input class="field" type="text" value="210 mm" aria-label="宽度"></span>
            <span class="times">x</span>
            <span class="spin"><input class="field" type="text" value="297 mm" aria-label="高度"></span>
            <span class="drop unit"><select class="field" aria-label="单位"><option>毫米</option></select></span>
          </div>
          <div class="row">
            <label class="name" for="orient">方向:</label>
            <span class="drop wide"><select class="field" id="orient"><option>纵向</option></select></span>
          </div>
          <div class="row">
            <label class="name" for="count">数量：</label>
            <span class="spin"><input class="field" type="text" id="count" value="1"></span>
          </div>
        </fieldset>
      </div>
      <div class="actions">
        <button type="button" class="primary">确定(<u>O</u>)</button>
        <button type="button">取消(<u>C</u>)</button>
      </div>
    </div>
  </form>
</div>
</body>
</html>
```
FILE: styles.css
```css
* { box-sizing: border-box; }
body {
  margin: 0;
  font: 8px/12px "Noto Sans", "Noto Sans CJK SC", sans-serif;
  color: #222;
}
h1, h2, h3, h4, p, ul { margin: 0; padding: 0; font-weight: 400; list-style: none; }
button, input, select { font: inherit; color: inherit; margin: 0; padding: 0; border: 0; background: none; }
button { white-space: nowrap; }
a { color: inherit; text-decoration: none; }
svg { display: block; flex: none; }
.defs { position: absolute; width: 0; height: 0; }
.muted { color: #777; }
.i { width: 14px; height: 14px; }
.faded { opacity: .5; }
.ar { flex: none; border: 2px solid transparent; border-top-color: currentColor; border-bottom: 0; }

.app {
  position: relative;
  display: flex;
  flex-direction: column;
  min-height: 100vh;
  background: #e9e9e9;
}

/* Title bar */
.titlebar {
  display: flex;
  align-items: flex-start;
  height: 21px;
  padding: 0 6px 0 3px;
  background: #1652c6;
  color: #fff;
}
.logo { width: 15px; height: 15px; margin: 3px 4px 0 0; }
.titlebar h1 { font-size: 9px; line-height: 21px; margin-right: auto; color: #d8e5fc; }
.vip { width: 50px; height: 15px; margin: 2px 6px 0 0; background: linear-gradient(90deg, #15171f, #3d3a3b); color: #f5d3a3; border-radius: 1px; }
.service { display: flex; align-items: center; gap: 2px; height: 16px; margin-right: 6px; color: #c9dcff; }
.agent { width: 13px; height: 15px; }
.account { display: flex; align-items: center; gap: 5px; height: 16px; width: 65px; padding-left: 7px; background: #5580d6; }
.avatar-small { width: 10px; height: 10px; }
.gem { width: 9px; height: 7px; }
.window-tools { display: flex; justify-content: space-between; width: 110px; height: 13px; margin: 4px 0 0 10px; padding-left: 9px; border-left: 1px solid #5984dd; }
.window-tools svg { width: 13px; height: 13px; }

/* Tabs */
.tabs { display: flex; height: 19px; margin: 0 2px; background: #dcdcdc; border-bottom: 1px solid #cecece; }
.file { width: 35px; margin-right: 2px; background: #bd4747; color: #fff; }
.tab { width: 26px; }
.tab.active { background: #f7f7f7; color: #1d5ca8; height: 19px; }
.tab-tools { display: flex; gap: 9px; margin-left: auto; padding-right: 4px; }
.tab-tools button { display: flex; align-items: center; gap: 2px; }
.abc { font-size: 7px; line-height: 8px; color: #a7bdcc; }
.collapse svg { width: 8px; height: 8px; margin-left: 4px; }

/* Ribbon */
.ribbon { display: flex; height: 64px; margin: 0 2px; padding-top: 1px; background: #f7f7f7; border-bottom: 1px solid #dadada; }
.group { display: flex; flex-direction: column; border-right: 1px dotted #ccc; }
.group h2 { font-size: 7px; line-height: 9px; text-align: center; color: #777; }
.tools { display: flex; height: 53px; }
.big { display: flex; flex-direction: column; align-items: center; width: 27px; padding-top: 6px; overflow: visible; }
.big .bi { width: 20px; height: 20px; margin-bottom: 6px; }
.big .ar { margin-top: 1px; border-width: 3px 3px 0; }
.hot { background: linear-gradient(#fff6cf, #ffe083); border: 1px solid #d9b65a; padding-top: 5px; }
.col { display: grid; grid-template-rows: repeat(3, 17px); justify-items: start; align-items: center; }
.col button, .nav-row, .layouts button, .marks button { display: flex; align-items: center; gap: 2px; height: 17px; }
.col .ar { margin-left: 4px; }

.g-file { width: 78px; padding-left: 2px; }
.g-file .tools { gap: 1px; }
.g-file .col { margin-left: 1px; }
.g-edit { width: 49px; padding-left: 1px; }
.g-edit .col { margin-left: 2px; }
.g-tool { width: 81px; padding-left: 4px; }
.g-tool .tools { gap: 2px; }
.g-print { width: 33px; padding-left: 3px; }
.g-goto { width: 133px; padding-left: 4px; }
.nav-row { gap: 3px; }
.g-zoom { width: 136px; padding-left: 2px; }
.g-zoom .big { width: 42px; }
.g-zoom .tools { gap: 2px; }
.g-zoom .col + .col { margin-left: 1px; }
.g-view { width: 185px; padding-left: 2px; }
.g-view .big { width: 34px; }
.layouts { display: grid; grid-template-columns: repeat(4, 17px); grid-template-rows: repeat(2, 23px); align-items: center; height: 50px; width: 81px; padding: 2px 0 0 4px; border: 1px dotted #ccc; border-width: 0 1px; }
.marks { display: grid; grid-template-columns: repeat(3, 18px); grid-template-rows: repeat(3, 17px); padding-left: 4px; }
.g-window { width: 71px; padding-left: 4px; }

.field {
  width: 100%;
  height: 14px;
  padding: 0 2px;
  border: 1px solid #b9b9b9;
  border-radius: 1px;
  background: #fff;
  line-height: 12px;
  appearance: none;
}
.ribbon .page-no { width: 55px; }
.drop, .spin { position: relative; display: inline-flex; }
.drop::after, .spin::before, .spin::after {
  content: "";
  position: absolute;
  right: 4px;
  top: 6px;
  border: 3px solid transparent;
  border-top-color: #888;
  border-bottom: 0;
}
.spin::after { top: 8px; border-top-color: #555; }
.spin::before { top: 3px; border-top: 0; border-bottom: 3px solid #555; }
.drop .zoom-level { width: 51px; }

/* Quick toolbar */
.toolbar { display: flex; align-items: center; height: 19px; margin: 0 2px; padding-left: 1px; background: #f7f7f7; }
.toolbar button { display: flex; align-items: center; justify-content: center; flex: none; min-width: 18px; height: 18px; padding: 0 2px; }
.toolbar button .ar { margin: 0 0 0 3px; }
.sep { flex: none; width: 1px; height: 15px; margin: 0 3px 0 2px; background: #ddd; }
.sep.tight { margin: 0 1px 0 0; }
.swatch { width: 14px; height: 14px; border: 2px solid #888; background: #fff; }
.swatch.solid { background: #858585; }
.drop .line-width { width: 46px; }
.drop .font-name { width: 59px; }
.drop .font-size { width: 33px; margin-left: 3px; }
.toolbar .glyph { position: relative; width: 18px; min-width: 18px; font: 14px/16px "Liberation Serif", serif; color: #999; }
.toolbar .small { width: 16px; min-width: 16px; font-size: 11px; }
.glyph sup, .glyph sub { font: 7px/7px "Noto Sans", sans-serif; color: #7ebbe5; }
.glyph sup { align-self: flex-start; margin-top: 2px; }
.glyph sub { align-self: flex-end; margin-bottom: 1px; }
.glyph .up { border: 2px solid transparent; border-top: 0; border-bottom: 3px solid #7ebbe5; }
.glyph .down { border: 2px solid transparent; border-bottom: 0; border-top: 3px solid #7ebbe5; }
.toolbar .warm { color: #e9a078; }
.badge-icon { position: absolute; right: 0; bottom: 2px; width: 8px; height: 8px; }

/* Canvas and start page */
.canvas {
  flex: 1;
  margin: 0 2px 2px;
  padding: 28px 0 22px 3px;
  border: 1px solid #777;
  border-top-color: #555;
  background:
    repeating-conic-gradient(rgba(255,255,255,.06) 0 25%, rgba(0,0,0,.05) 0 50%) 0 0 / 2px 2px,
    linear-gradient(#8c8c8c, #a2a2a2 18%, #b0b0b0 50%, #a8a8a8 80%, #969696);
}
.page {
  display: grid;
  grid-template-columns: 218fr 226fr;
  gap: 29px;
  width: 492px;
  max-width: 96%;
  min-height: 357px;
  margin: 0 auto;
  padding: 18px 10px 0 9px;
  background: #fff;
}
.start { display: flex; flex-direction: column; padding-bottom: 25px; }
.login { display: flex; align-items: center; gap: 8px; height: 49px; padding-left: 7px; border-radius: 3px; background: linear-gradient(172deg, transparent 84%, #6790df 85%), #5180dc; color: #fff; font-size: 11px; }
.avatar { width: 25px; height: 25px; }
.start h3 { margin: 14px 0 0 -3px; font-size: 9px; color: #666; }
.recent { display: flex; align-items: center; gap: 7px; margin: 15px 0 0 8px; font-size: 9px; color: #888; }
.pdf-icon { width: 16px; height: 18px; }
.open { height: 25px; margin: auto 9px 0 8px; border-radius: 2px; background: #5180dc; color: #fff; font-size: 9px; }
.features { display: flex; flex-direction: column; height: 86px; padding: 12px 11px 0 13px; border-radius: 3px; background: #5180dc; color: #fff; }
.features h3 { font-size: 9px; }
.ocr { display: flex; flex-direction: column; align-items: center; align-self: flex-end; gap: 2px; margin-top: 14px; font-size: 7px; }
.tile { display: grid; place-items: center; width: 20px; height: 20px; border-radius: 3px; background: #fff; color: #2f65c8; font-size: 12px; font-weight: 700; }
.more ul { padding: 29px 0 0 17px; }
.more li { position: relative; display: flex; gap: 13px; height: 55px; }
.more li > svg { width: 22px; height: 22px; margin-top: 4px; }
.more h4 { font-size: 9px; line-height: 13px; color: #333; }
.more p { line-height: 10px; color: #999; white-space: nowrap; }
.tag { position: absolute; right: 0; top: -9px; width: 38px; border-radius: 4px 4px 0 4px; background: linear-gradient(90deg, #ff9b56, #ff5d5d); color: #fff; text-align: center; font-size: 9px; }

/* New document dialog */
.dialog {
  position: absolute;
  left: calc(50% - 151px);
  top: 196px;
  width: 302px;
  padding: 0 4px 4px;
  border: 1px solid #22334c;
  border-radius: 5px;
  background:
    linear-gradient(90deg, #b4c7e4 0, #86a6d6 22%, #4f7ac0 34%, #5c86c8 43%, #b7dcfc 45%, #b7dcfc 53%, #4571bd 55%, #6b93cf 72%, #a5c3e8 86%, #8db2e3) 0 0 / 100% 18px no-repeat,
    linear-gradient(#8fb4e6, #4674c4 36%, #b5dcf8 38%, #a5d6f6);
  box-shadow: inset 0 0 0 1px #c3e2fa, 1px 2px 7px 2px rgba(0,0,0,.7);
}
.dialog header { display: flex; align-items: center; gap: 4px; height: 18px; padding-left: 2px; }
.dialog header svg { width: 9px; height: 7px; }
.dialog header h2 { font-size: 8px; color: #111; text-shadow: 0 0 4px #fff, 0 0 6px #fff; }
.close { align-self: flex-start; width: 30px; height: 12px; margin: 1px 0 0 auto; border: 1px solid #6d2c2c; border-top: 0; border-radius: 0 0 3px 3px; background: linear-gradient(#e39a8d, #c53e2e 50%, #b0392b); color: #fff; font-size: 8px; font-weight: 700; line-height: 10px; }
.dialog-body { padding: 2px 4px 4px; border: 1px solid #6e7c8d; background: repeating-conic-gradient(#e1e1e1 0 25%, #dcdcdc 0 50%) 0 0 / 2px 2px; }
.panel { padding: 5px; border: 1px solid #b5b5b5; border-radius: 3px; background: #e8e8e8; }
fieldset { min-width: 0; margin: 0; padding: 0 6px 6px; border: 1px solid #d6d6d6; border-radius: 2px; background: repeating-conic-gradient(#e8e8e8 0 25%, #e4e4e4 0 50%) 0 0 / 2px 2px; }
legend { float: left; width: 100%; padding: 0; margin: 0 0 4px -3px; color: #45617f; }
.row { display: flex; align-items: center; clear: both; height: 17px; }
.radio { display: flex; align-items: center; gap: 3px; width: 57px; }
.radio input { appearance: none; width: 10px; height: 10px; border: 1px solid #8e8e8e; border-radius: 50%; background: #fff; }
.radio input:checked { border-color: #c99b32; background: radial-gradient(circle, #1d55b4 0 2px, #fff 3px); box-shadow: 0 0 2px #f0b93c; }
.focus { outline: 1px dotted #aaa; line-height: 11px; }
.name { width: 57px; padding-right: 2px; text-align: right; }
.dialog .field { border-color: #a2a2a2; border-radius: 2px; }
.wide { width: 126px; }
.dialog .preset { color: #555; }
.spin { width: 52px; }
.times { width: 22px; text-align: center; }
.unit { width: 70px; margin-left: 5px; }
.actions { display: flex; justify-content: flex-end; gap: 3px; padding: 5px 2px 0; }
.actions button { width: 69px; height: 17px; border: 1px solid #a5a5a5; border-radius: 3px; background: linear-gradient(#f0f0f0, #dedede); }
.actions .primary { border-color: #4da3d8; box-shadow: inset 0 0 0 1px #a5daf6; }
```
